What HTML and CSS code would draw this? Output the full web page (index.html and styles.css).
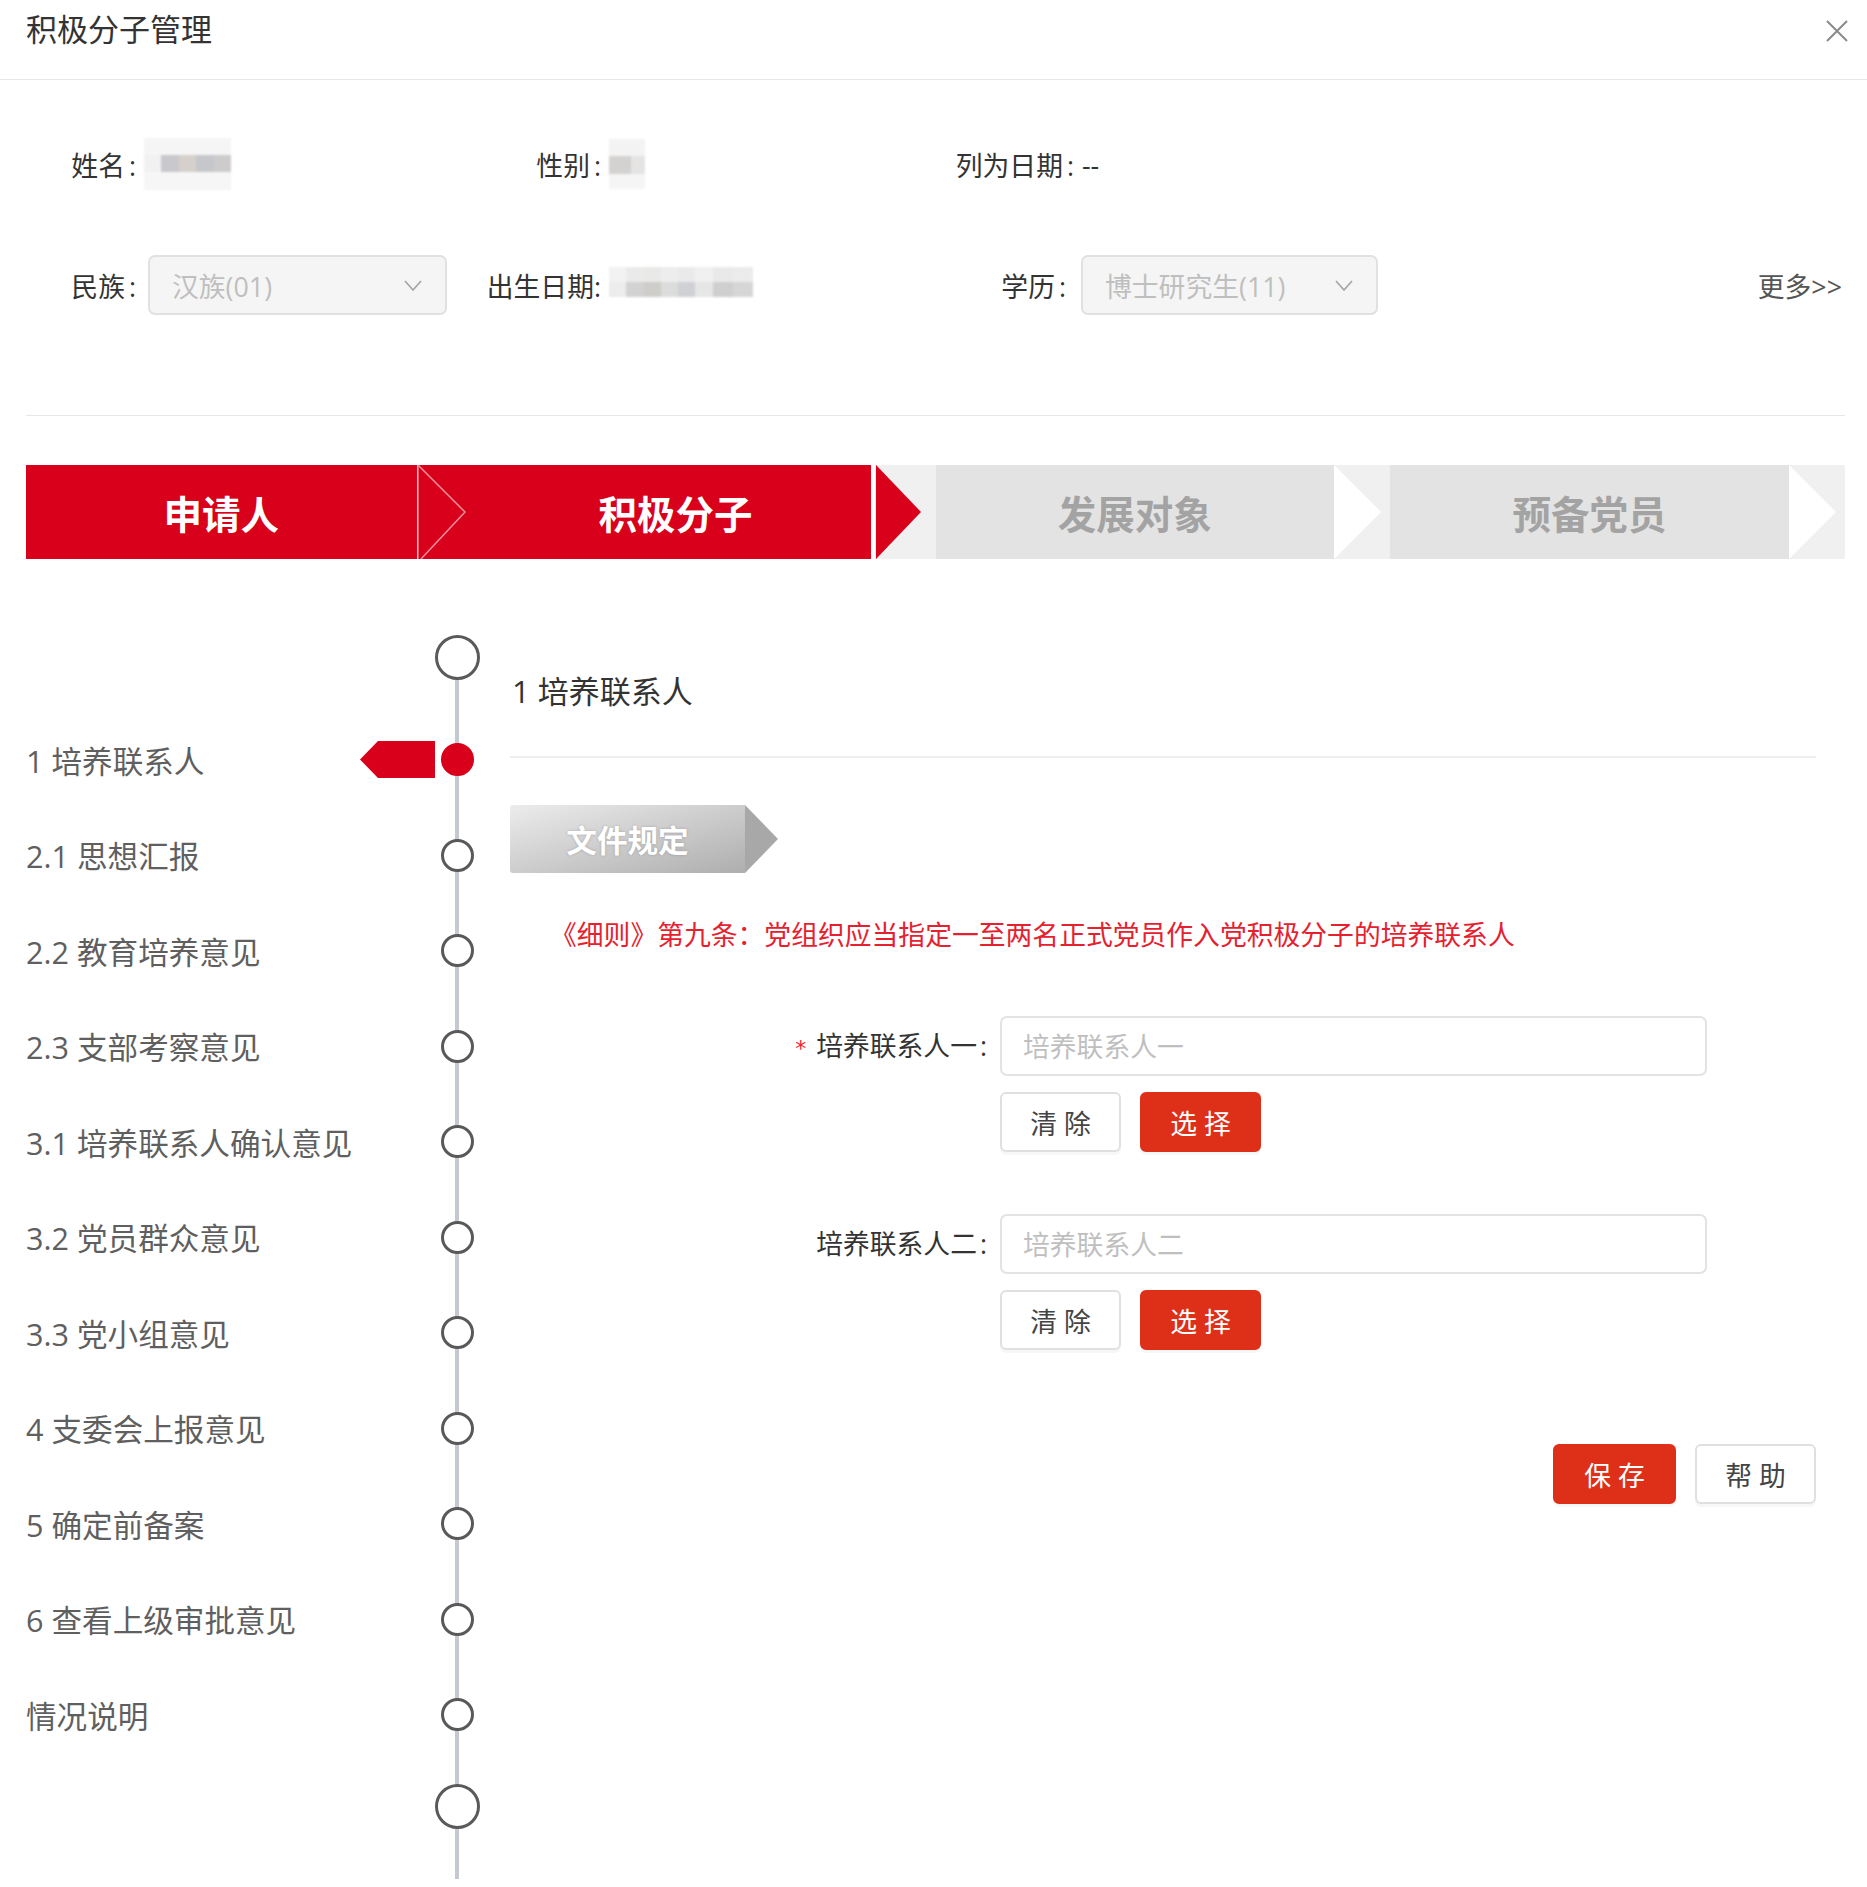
FILE: index.html
```html
<!DOCTYPE html>
<html lang="zh-CN">

<head>
  <meta charset="UTF-8">
  <meta name="viewport" content="width=device-width, initial-scale=1.0">
  <title>积极分子管理</title>
  <link rel="stylesheet" href="styles.css">
</head>

<body>
  <header class="modal-head">
    <h1 class="modal-title">积极分子管理</h1>
    <button class="modal-close" type="button" aria-label="关闭">
      <svg width="22" height="22" viewBox="0 0 22 22">
        <path d="M1 1 L21 21 M21 1 L1 21" stroke="#8a8a8a" stroke-width="2" fill="none" />
      </svg>
    </button>
  </header>

  <!-- basic info -->
  <section class="profile">
    <span class="field-label">姓名<span class="colon">:</span></span>
    <span class="field-value"><span class="mosaic mosaic-name"></span></span>
    <span class="field-label">性别<span class="colon">:</span></span>
    <span class="field-value"><span class="mosaic mosaic-sex"></span></span>
    <span class="field-label">列为日期<span class="colon">:</span></span>
    <span class="field-value">--</span>
    <span></span>

    <span class="field-label">民族<span class="colon">:</span></span>
    <span class="select">汉族(01)
      <svg width="18" height="11" viewBox="0 0 18 11"><polyline points="1,1 9,10 17,1" fill="none" stroke="#a3a3a3" stroke-width="1.6" /></svg>
    </span>
    <span class="field-label">出生日期:</span>
    <span class="field-value"><span class="mosaic mosaic-date"></span></span>
    <span class="field-label field-label-edu">学历<span class="colon">:</span></span>
    <span class="select select-edu">博士研究生(11)
      <svg width="18" height="11" viewBox="0 0 18 11"><polyline points="1,1 9,10 17,1" fill="none" stroke="#a3a3a3" stroke-width="1.6" /></svg>
    </span>
    <a class="more" href="#">更多&gt;&gt;</a>
  </section>

  <!-- stage bar -->
  <nav class="stages">
    <div class="stage done">
      <span class="stage-body">申请人</span>
      <svg class="stage-arrow arrow-done" viewBox="0 0 64 94" preserveAspectRatio="none">
        <rect x="0" y="0" width="1.5" height="94" fill="#f6c2c8" />
        <polyline points="1,0 48,47 4,94" fill="none" stroke="#ef8f9b" stroke-width="1.5" />
      </svg>
    </div>
    <div class="stage current">
      <span class="stage-body">积极分子</span>
      <svg class="stage-arrow arrow-current" viewBox="0 0 65 94" preserveAspectRatio="none">
        <rect x="0" y="0" width="4" height="94" fill="#ffffff" />
        <polygon points="5,0 50,47 5,94" fill="#d9001b" />
      </svg>
    </div>
    <div class="stage">
      <span class="stage-body">发展对象</span>
      <svg class="stage-arrow arrow-todo" viewBox="0 0 56 94" preserveAspectRatio="none">
        <polygon points="0,0 47,47 0,94" fill="#ffffff" />
      </svg>
    </div>
    <div class="stage">
      <span class="stage-body">预备党员</span>
      <svg class="stage-arrow arrow-todo" viewBox="0 0 56 94" preserveAspectRatio="none">
        <polygon points="0,0 47,47 0,94" fill="#ffffff" />
      </svg>
    </div>
  </nav>

  <main class="main">
    <aside class="timeline">
      <div class="tl-cap"><span class="tl-ring"></span></div>
      <ul class="tl-list">
        <li class="tl-item active">
          <span class="tl-label">1 培养联系人</span>
          <svg class="tl-flag" viewBox="0 0 75 37"><polygon points="18,0 75,0 75,37 18,37 0,18.5" fill="#d9001b" /></svg>
          <span class="tl-mark"><span class="tl-dot"></span></span>
        </li>
        <li class="tl-item"><span class="tl-label">2.1 思想汇报</span><span class="tl-mark"><span class="tl-dot"></span></span></li>
        <li class="tl-item"><span class="tl-label">2.2 教育培养意见</span><span class="tl-mark"><span class="tl-dot"></span></span></li>
        <li class="tl-item"><span class="tl-label">2.3 支部考察意见</span><span class="tl-mark"><span class="tl-dot"></span></span></li>
        <li class="tl-item"><span class="tl-label">3.1 培养联系人确认意见</span><span class="tl-mark"><span class="tl-dot"></span></span></li>
        <li class="tl-item"><span class="tl-label">3.2 党员群众意见</span><span class="tl-mark"><span class="tl-dot"></span></span></li>
        <li class="tl-item"><span class="tl-label">3.3 党小组意见</span><span class="tl-mark"><span class="tl-dot"></span></span></li>
        <li class="tl-item"><span class="tl-label">4 支委会上报意见</span><span class="tl-mark"><span class="tl-dot"></span></span></li>
        <li class="tl-item"><span class="tl-label">5 确定前备案</span><span class="tl-mark"><span class="tl-dot"></span></span></li>
        <li class="tl-item"><span class="tl-label">6 查看上级审批意见</span><span class="tl-mark"><span class="tl-dot"></span></span></li>
        <li class="tl-item"><span class="tl-label">情况说明</span><span class="tl-mark"><span class="tl-dot"></span></span></li>
      </ul>
      <div class="tl-cap"><span class="tl-ring"></span></div>
    </aside>

    <section class="content">
      <h2 class="section-title">1 培养联系人</h2>

      <div class="doc-tag">
        <span class="doc-tag-body">文件规定</span>
        <span class="doc-tag-arrow"></span>
      </div>

      <p class="rule">《细则》第九条：党组织应当指定一至两名正式党员作入党积极分子的培养联系人</p>

      <form class="contact-form">
        <div class="form-item">
          <label class="form-label"><span class="req">*</span>培养联系人一<span class="colon">:</span></label>
          <input class="form-input" type="text" placeholder="培养联系人一">
          <div class="form-actions">
            <button class="btn" type="button">清 除</button>
            <button class="btn btn-primary" type="button">选 择</button>
          </div>
        </div>
        <div class="form-item">
          <label class="form-label">培养联系人二<span class="colon">:</span></label>
          <input class="form-input" type="text" placeholder="培养联系人二">
          <div class="form-actions">
            <button class="btn" type="button">清 除</button>
            <button class="btn btn-primary" type="button">选 择</button>
          </div>
        </div>
      </form>

      <div class="footer-actions">
        <button class="btn btn-primary btn-wide" type="button">保 存</button>
        <button class="btn" type="button">帮 助</button>
      </div>
    </section>
  </main>
</body>

</html>
```

FILE: styles.css
```css
body {
  margin: 0;
  background-color: #fff;
  color: #333;
  font-family: "Open Sans", "Noto Sans CJK SC", sans-serif;
  font-size: 26.8px;
}

/* header */
.modal-head {
  display: flex;
  justify-content: space-between;
  align-items: flex-start;
  height: 79px;
  padding: 0 19px 0 26px;
  border-bottom: 1px solid #e8e8e8;
}

.modal-title {
  margin: 0;
  font-size: 31px;
  font-weight: 400;
  line-height: 58px;
  color: #333;
}

.modal-close {
  margin-top: 20px;
  padding: 0;
  border: none;
  background: none;
  cursor: pointer;
  line-height: 0;
}

/* profile */
.profile {
  display: grid;
  grid-template-columns: 114px 325px 140px 333px 140px 1fr auto;
  grid-auto-rows: 60px;
  row-gap: 61px;
  align-items: center;
  margin: 0 22px 0 26px;
  padding: 54px 3px 100px 0;
  border-bottom: 1px solid #e6e6e6;
}

.field-label {
  text-align: right;
  padding-right: 4px;
  white-space: nowrap;
  color: #333;
}

.field-label-edu {
  padding-right: 12px;
}

.colon {
  margin-left: 4px;
}

.field-value {
  display: flex;
  align-items: center;
  padding-left: 4px;
  color: #333;
}

.mosaic {
  display: inline-block;
  filter: blur(1.2px);
}

.mosaic-name {
  width: 87px;
  height: 52px;
  background:
    linear-gradient(to bottom, #f5f5f5 0 32%, transparent 32% 66%, #f6f6f6 66%),
    linear-gradient(to right, #f1f1f1 0 20%, #c8c8cd 20% 40%, #d5d0cb 40% 60%, #c6c7cb 60% 80%, #cdcbcb 80%);
}

.mosaic-sex {
  width: 36px;
  height: 50px;
  background:
    linear-gradient(to bottom, #f3f3f3 0 34%, transparent 34% 70%, #f5f5f5 70%),
    linear-gradient(to right, #d4d2d0 0 60%, #e4e4e4 60%);
}

.mosaic-date {
  width: 144px;
  height: 30px;
  margin-top: -6px;
  background:
    linear-gradient(to bottom, rgba(245, 245, 245, 0.7) 0 50%, transparent 50%),
    linear-gradient(to right, #ececec 0 12%, #d2d2d2 12% 24%, #cfcdca 24% 36%, #dcdcdc 36% 48%, #d0d1d4 48% 60%, #e6e6e6 60% 72%, #cfcfcf 72% 86%, #d6d6d6 86%);
}

.select {
  display: flex;
  align-items: center;
  justify-content: space-between;
  box-sizing: border-box;
  width: 299px;
  height: 60px;
  margin-left: 8px;
  padding: 0 23px 0 22px;
  border: 2px solid #e1e1e1;
  border-radius: 7px;
  background-color: #f5f5f5;
  color: #bfbfbf;
}

.select-edu {
  width: 297px;
  margin-left: 3px;
}

.more {
  color: #555;
  text-decoration: none;
  white-space: nowrap;
}

/* stage bar */
.stages {
  display: grid;
  grid-template-columns: repeat(4, 1fr);
  height: 94px;
  margin: 49px 22px 0 26px;
}

.stage {
  display: flex;
  background-color: #f0f0f0;
}

.stage-body {
  flex: 1;
  display: flex;
  align-items: center;
  justify-content: center;
  background-color: #e3e3e3;
  color: #a3a3a3;
  font-size: 38.5px;
  font-weight: 700;
}

.stage.done,
.stage.done .stage-body,
.stage.current .stage-body {
  background-color: #d9001b;
  color: #fff;
}

.stage-arrow {
  flex: none;
  height: 94px;
}

.arrow-done {
  width: 64px;
}

.arrow-current {
  width: 65px;
}

.arrow-todo {
  width: 56px;
}

/* main area */
.main {
  display: flex;
  align-items: flex-start;
  padding: 0 51px 0 26px;
}

.timeline {
  position: relative;
  flex: none;
  width: 454px;
  padding: 76px 0 50px;
}

.timeline::before {
  content: "";
  position: absolute;
  left: 429px;
  top: 99px;
  bottom: 0;
  width: 4px;
  background-color: #c4c8d0;
}

.tl-cap {
  position: relative;
  display: flex;
  justify-content: flex-end;
  height: 45px;
}

.tl-ring {
  box-sizing: border-box;
  width: 45px;
  height: 45px;
  border: 3px solid #5a5a5a;
  border-radius: 50%;
  background-color: #fff;
}

.tl-list {
  list-style: none;
  margin: 32px 0 21px;
  padding: 0;
}

.tl-item {
  display: flex;
  align-items: center;
  height: 95.5px;
}

.tl-label {
  flex: 1;
  font-size: 30.6px;
  color: #5f5f5f;
  white-space: nowrap;
}

.tl-flag {
  width: 75px;
  height: 37px;
  margin-right: -1px;
}

.tl-mark {
  position: relative;
  display: flex;
  justify-content: center;
  width: 46px;
}

.tl-dot {
  box-sizing: border-box;
  width: 33px;
  height: 33px;
  border: 3px solid #595959;
  border-radius: 50%;
  background-color: #fff;
}

.tl-item.active .tl-dot {
  border-color: #d9001b;
  background-color: #d9001b;
}

/* content */
.content {
  flex: 1;
  margin-left: 30px;
  padding-top: 112px;
}

.section-title {
  margin: 0;
  padding: 0 0 45px 2px;
  border-bottom: 2px solid #eeeeee;
  font-size: 31px;
  font-weight: 400;
  line-height: 40px;
  color: #333;
}

.doc-tag {
  display: flex;
  height: 68px;
  margin-top: 47px;
}

.doc-tag-body {
  display: flex;
  align-items: center;
  justify-content: center;
  width: 235px;
  border-radius: 3px 0 0 3px;
  background: linear-gradient(to bottom right, #ececec, #aeaeae);
  color: #fff;
  font-size: 30.6px;
  font-weight: 700;
  text-shadow: 0 0 3px rgba(0, 0, 0, 0.2);
}

.doc-tag-arrow {
  width: 33px;
  background-color: #a8a8a8;
  clip-path: polygon(0 0, 100% 50%, 0 100%);
}

.rule {
  margin: 44px 0 0;
  padding-left: 40px;
  font-size: 26.8px;
  line-height: 36px;
  color: #e6212f;
}

.contact-form {
  margin-top: 63px;
}

.form-item {
  display: grid;
  grid-template-columns: 490px 707px;
  row-gap: 13px;
}

.form-item + .form-item {
  margin-top: 62px;
  row-gap: 16px;
}

.form-label {
  padding-right: 13px;
  text-align: right;
  line-height: 60px;
  color: #333;
}

.form-label .colon {
  margin-left: 3px;
}

.req {
  margin-right: 10px;
  color: #f5222d;
  font-family: "DejaVu Sans", sans-serif;
  font-size: 22px;
}

.form-input {
  box-sizing: border-box;
  height: 60px;
  padding: 0 21px;
  border: 2px solid #e3e3e3;
  border-radius: 7px;
  font-family: inherit;
  font-size: 26.8px;
  color: #333;
  outline: none;
}

.form-input::placeholder {
  color: #bfbfbf;
}

.form-actions {
  grid-column: 2;
  display: flex;
  gap: 19px;
}

.btn {
  box-sizing: border-box;
  width: 121px;
  height: 60px;
  padding: 0;
  border: 2px solid #e0e0e0;
  border-radius: 6px;
  background-color: #fff;
  box-shadow: 0 3px 0 rgba(0, 0, 0, 0.03);
  color: #444;
  font-family: inherit;
  font-size: 26.8px;
  cursor: pointer;
}

.btn-primary {
  border-color: #de3019;
  background-color: #de3019;
  color: #fff;
}

.btn-wide {
  width: 123px;
}

.footer-actions {
  display: flex;
  justify-content: flex-end;
  gap: 19px;
  margin-top: 94px;
}
```
